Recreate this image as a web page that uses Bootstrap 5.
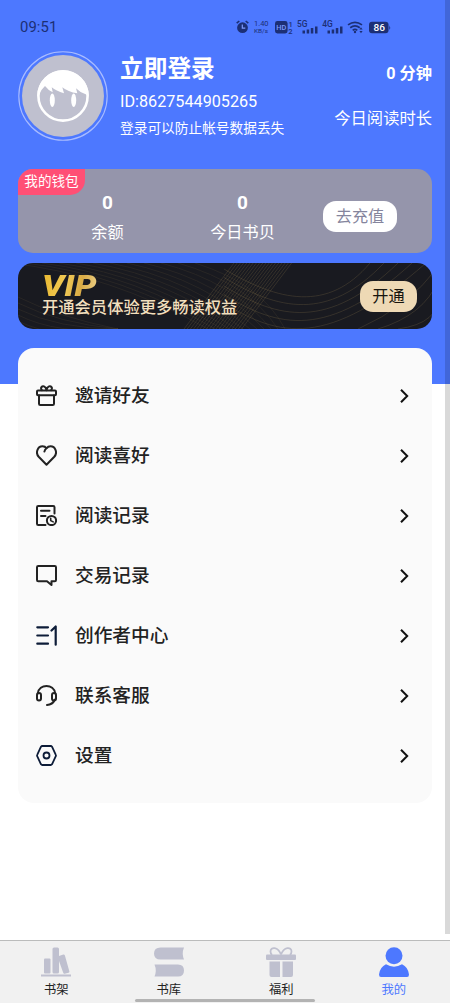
<!DOCTYPE html>
<html lang="zh-CN">
<head>
<meta charset="utf-8">
<meta name="viewport" content="width=device-width, initial-scale=1">
<title>我的</title>
<link href="https://cdn.jsdelivr.net/npm/bootstrap@5.3.0/dist/css/bootstrap.min.css" rel="stylesheet">
<style>
:root{--brand:#4d78ff;--ink:#1c2f75;--muted-icon:#bfc0cf}
body{font-family:Roboto,"Noto Sans CJK SC",sans-serif;background:linear-gradient(var(--brand) 384px,#fff 384px) no-repeat;height:1003px;overflow:hidden;color:#222}
svg{display:block;flex:none}
.status-row{height:51px;padding:4px 0 0 20px;color:var(--ink)}
.clock{font-size:14.8px;width:216px;letter-spacing:.1px}
.profile{height:118px;padding:0 18px}
.avatar{width:90px;height:90px}
.who{margin-left:12px;padding-top:1px}
.who-name{font-size:23.7px;font-weight:700;line-height:34px}
.who-id{font-size:16.2px;line-height:32px}
.who-tip{font-size:13.7px;line-height:20px}
.minutes{font-size:16.2px;font-weight:700;line-height:24px;margin-top:11px}
.today{font-size:16.3px;line-height:24px;margin-top:21px}
.wallet{height:84px;margin:0 18px;border-radius:15px;background:#9595ab}
.wallet-tag{width:67px;height:26px;line-height:25px;font-size:13.6px;background:#ff4f75;border-radius:15px 0 15px 0}
.figure-col{width:135px}
.figure-num{font-size:19px;font-weight:700;line-height:24px;margin-top:22px}
.figure-label{font-size:16.2px;line-height:24px;margin-top:6px}
.pill{font-size:16.2px;line-height:31px;height:31px;border-radius:13px}
.pill-charge{width:74px;background:#fff;color:#85859d;margin:32px 0 0 35px}
.pill-open{width:57px;background:#eed9b5;color:#17150f;margin-right:15px}
.vip{height:66px;margin:10px 18px 19px;border-radius:15px;background:#191a20;color:#f2dfbd}
.vip-word{font-size:29px;font-weight:900;font-style:italic;line-height:24px;background:linear-gradient(100deg,#e9b82f,#f0c955 40%,#d9ab45 65%,#f3dc9c);-webkit-background-clip:text;background-clip:text;color:transparent;transform:scaleX(1.2);transform-origin:left;padding-right:4px}
.vip-tip{font-size:16.3px;font-weight:500;line-height:20px;margin-top:-5px}
.menu{height:455px;margin:0 18px;padding:17px 18px 0;border-radius:16px;background:#fafafa}
.menu-line{height:60px;font-size:18.7px;font-weight:500;color:#222}
.menu-line svg{fill:none;stroke:#222;stroke-width:2;stroke-linejoin:round;stroke-linecap:round}
.menu-line .navy{stroke:#0d1c38}
.menu-line .chev{stroke:#111;stroke-linejoin:miter;stroke-linecap:butt}
.menu-name{margin-left:18px;padding-top:2px}
.tabs{height:63px;background:#f1f1f1;border-top:1px solid #bbbcbc}
.tab-cell{color:#222;font-size:12.3px;line-height:20px;padding-top:6px}
.tab-cell svg{fill:var(--muted-icon);margin-bottom:3px}
.tab-cell.now{color:var(--brand)}
.tab-cell.now svg{fill:var(--brand)}
.home-bar{width:180px;height:3px;border-radius:2px;background:#b3b3b3;left:135px;bottom:1px}
.scroll-track{width:5px;height:934px;background:rgba(0,0,0,.15)}
</style>
</head>
<body class="position-relative d-flex flex-column">
<header class="status-row d-flex align-items-center">
  <span class="clock">09:51</span>
  <svg width="160" height="20" viewBox="0 0 160 20" fill="#1c2f75" stroke="none" font-family="Roboto" font-weight="500">
    <circle cx="6.5" cy="9.7" r="5.4"/><path d="M.7 5.2 3.3 3M12.3 5.2 9.7 3" stroke="#1c2f75" stroke-width="1.6"/><path d="M6.3 6.5v3.7h3" fill="none" stroke="#7d9bff" stroke-width="1.2"/>
    <text x="18" y="8.4" font-size="7.5" font-weight="400" textLength="14.5" lengthAdjust="spacingAndGlyphs">1.40</text><text x="18" y="15.3" font-size="6.2" font-weight="400" textLength="14" lengthAdjust="spacingAndGlyphs">KB/s</text>
    <rect x="39" y="3" width="12.6" height="12.4" rx="2.4"/><text x="40.3" y="12" font-size="8" fill="#7d9bff" textLength="10" lengthAdjust="spacingAndGlyphs">HD</text>
    <text x="52.5" y="8.5" font-size="7.5">1</text><text x="52.3" y="15.600" font-size="7.5">2</text>
    <text x="61" y="8.5" font-size="8.2" textLength="10.5" lengthAdjust="spacingAndGlyphs">5G</text><path d="M66.500 12.500h2.500v3h-2.500zM70.700 11.500h2.500v4h-2.500zM74.800 10h2.500v5.500h-2.500zM79 8.500h2.500v7h-2.500z"/>
    <text x="86.3" y="8.5" font-size="8.2" textLength="10.5" lengthAdjust="spacingAndGlyphs">4G</text><path d="M91.500 12.500h2.500v3h-2.500zM95.700 11.500h2.500v4h-2.500zM99.800 10h2.500v5.500h-2.500zM104 8.500h2.500v7h-2.500z"/>
    <path d="M112 6.900q7-5 14 0M114.2 9.700q4.800-3.600 9.600 0M116.700 12.300q2.300-1.800 4.600 0" fill="none" stroke="#1c2f75" stroke-width="1.7"/><circle cx="119" cy="14" r="1.2"/><path d="m125 9.200 1.600 2.200h-3.200zM125 15.200l1.600-2.200h-3.200z"/>
    <rect x="133" y="3.800" width="19.5" height="11.5" rx="3"/><path d="M153.3 7.200q1.800 2.400 0 4.800z"/><text x="137.500" y="12.900" font-size="9.500" fill="#fff" textLength="11.500" lengthAdjust="spacingAndGlyphs">86</text>
  </svg>
</header>

<section class="profile d-flex text-white">
  <svg class="avatar" viewBox="0 0 90 90">
    <circle cx="45" cy="45" r="44.2" fill="none" stroke="#a9bcff" stroke-width="1.1"/>
    <circle cx="45" cy="45" r="41" fill="#bfc0cf"/>
    <circle cx="45" cy="45" r="24.6" fill="none" stroke="#fff" stroke-width="2.600"/>
    <path d="M19.200 45A25.800 25.800 0 0 1 70.800 45L67.700 43.300Q62 41.500 58 37.300L59.300 42.300Q50 41 44.300 36.300L46 42.300Q38 40 33.700 36.300L34.700 41.300Q30 39 27 35 22.500 39 21 44Z" fill="#fff"/>
    <ellipse cx="34.300" cy="49.300" rx="2.500" ry="6.800" fill="#fff"/><ellipse cx="55.700" cy="49.300" rx="2.500" ry="6.800" fill="#fff"/>
  </svg>
  <div class="who">
    <div class="who-name">立即登录</div>
    <div class="who-id">ID:8627544905265</div>
    <div class="who-tip">登录可以防止帐号数据丢失</div>
  </div>
  <div class="ms-auto text-end">
    <div class="minutes">0 分钟</div>
    <div class="today">今日阅读时长</div>
  </div>
</section>

<section class="wallet position-relative d-flex text-white">
  <span class="wallet-tag position-absolute top-0 start-0 text-center">我的钱包</span>
  <div class="figure-col text-center" style="margin-left:22px"><div class="figure-num">0</div><div class="figure-label">余额</div></div>
  <div class="figure-col text-center"><div class="figure-num">0</div><div class="figure-label">今日书贝</div></div>
  <div class="pill pill-charge text-center" style="margin-left:13px">去充值</div>
</section>

<section class="vip position-relative overflow-hidden d-flex align-items-center justify-content-between">
  <svg id="waves" class="position-absolute top-0 start-0" width="414" height="66" fill="none" stroke="#a58a55" stroke-width=".7"></svg>
  <div class="position-relative" style="margin-left:24px">
    <div class="vip-word d-inline-block">VIP</div>
    <div class="vip-tip">开通会员体验更多畅读权益</div>
  </div>
  <div class="pill pill-open text-center position-relative">开通</div>
</section>

<main class="menu">
  <div class="menu-line d-flex align-items-center">
    <svg width="21" height="21" viewBox="0 0 21 21"><rect x="1" y="5.500" width="19" height="4.800" rx="1"/><path d="M3 10.500v8.200q0 1.300 1.300 1.300h12.400q1.300 0 1.300-1.300v-8.200M5.800 5.200C4 2.800 6 .8 8 1.400 9.500 2 10.200 3.700 10.500 5.200 10.800 3.700 11.500 2 13 1.400 15 .8 17 2.800 15.200 5.200"/></svg>
    <span class="menu-name">邀请好友</span>
  </div>
  <div class="menu-line d-flex align-items-center">
    <svg width="21" height="21" viewBox="0 0 21 21"><path d="M10.500 19.800 2.700 11.800C-.8 8 1.500 1.300 6.500 1.300 8.500 1.300 9.800 2.300 10.500 3.300 11.500 2 12.800 1.300 14.500 1.300 19.500 1.300 21.800 8 18.300 11.800ZM10.500 3.300Q8.800 4.500 8.400 6.600"/></svg>
    <span class="menu-name">阅读喜好</span>
  </div>
  <div class="menu-line d-flex align-items-center">
    <svg width="21" height="21" viewBox="0 0 21 21"><path d="M9.500 20H2.300Q1 20 1 18.700V2.300Q1 1 2.300 1H17.200Q18.500 1 18.500 2.300V8.500M5 5.800h8.500M5 11h4.500"/><circle cx="15.500" cy="15.500" r="4.600"/><path d="M14.700 13.300v2.300l2.500 1.300" stroke-width="1.600"/></svg>
    <span class="menu-name">阅读记录</span>
  </div>
  <div class="menu-line d-flex align-items-center">
    <svg width="21" height="21" viewBox="0 0 21 21"><path d="M11 16.200H2.300Q1 16.200 1 14.900V2.300Q1 1 2.300 1H18.700Q20 1 20 2.300V14.900Q20 16.200 18.700 16.200H15.500V20L11 16.200"/></svg>
    <span class="menu-name">交易记录</span>
  </div>
  <div class="menu-line d-flex align-items-center">
    <svg class="navy" width="21" height="21" viewBox="0 0 21 21" style="stroke-width:2.200"><path d="M1.300 2.300H12M1.300 10.500H12M1.300 18.700H12M15.500 5.500 19.700 1.500V19.700"/></svg>
    <span class="menu-name">创作者中心</span>
  </div>
  <div class="menu-line d-flex align-items-center">
    <svg width="21" height="21" viewBox="0 0 21 21"><path d="M1.800 8.500C3-1.500 18-1.500 19.200 8.500M19 14.500Q16.500 19.800 11 20"/><rect x="1" y="8" width="4" height="7.500" rx="2"/><rect x="16" y="8" width="4" height="7.500" rx="2"/></svg>
    <span class="menu-name">联系客服</span>
  </div>
  <div class="menu-line d-flex align-items-center">
    <svg class="navy" width="21" height="21" viewBox="0 0 21 21" style="stroke-width:1.800"><path d="M6.300 1H14.700Q15.500 1 16 1.700L19.700 9.600Q20.200 10.500 19.700 11.400L16 19.300Q15.500 20 14.700 20H6.300Q5.500 20 5 19.300L1.300 11.400Q.8 10.500 1.300 9.600L5 1.700Q5.500 1 6.300 1Z"/><circle cx="10.500" cy="10.500" r="3"/></svg>
    <span class="menu-name">设置</span>
  </div>
</main>

<nav class="tabs mt-auto position-relative row g-0">
  <div class="tab-cell col d-flex flex-column align-items-center">
    <svg width="30" height="30" viewBox="0 0 30 30"><rect x="3" y="11.500" width="6.500" height="15" rx="1"/><rect x="11.500" y=".5" width="6.500" height="26" rx="1.500"/><path d="m18 9 4.300-1.500q1.200-.2 1.600 1l4.500 16q.2 1-.8 1.300l-4 1q-1 .2-1.300-.8L18 14Z"/><rect y="27.500" width="30" height="2"/></svg>
    <span>书架</span>
  </div>
  <div class="tab-cell col d-flex flex-column align-items-center">
    <svg width="30" height="30" viewBox="0 0 30 30"><path d="M6.500.500H30Q27.500 6.500 30 12.500H6.500Q0 12.500 0 6.500T6.500.500ZM.500 17.500H24Q30 17.500 30 23.500T24 29.500H.500Q3 23.500.500 17.500Z"/></svg>
    <span>书库</span>
  </div>
  <div class="tab-cell col d-flex flex-column align-items-center">
    <svg width="30" height="30" viewBox="0 0 30 30"><rect y="7.500" width="30" height="5.500" rx="1"/><path d="M3.500 14.500H14V30H5.500Q3.500 30 3.500 28ZM16.500 14.500H27V28Q27 30 25 30H16.500Z"/><path d="M15 7.500C12-.500 4.500-.500 4.500 4.500Q4.500 6.500 6 8M15 7.500C18-.500 25.500-.500 25.500 4.500Q25.500 6.500 24 8" fill="none" stroke="#bfc0cf" stroke-width="1.800"/></svg>
    <span>福利</span>
  </div>
  <div class="tab-cell now col d-flex flex-column align-items-center">
    <svg width="30" height="30" viewBox="0 0 30 30"><circle cx="15" cy="8.700" r="8.500"/><path d="M7 17.300Q15 22 23 17.300Q29 20 30 27.500 30 30 28 30H2Q0 30 0 27.500 1 20 7 17.300Z"/></svg>
    <span>我的</span>
  </div>
  <div class="home-bar position-absolute"></div>
</nav>
<div class="scroll-track position-absolute top-0 end-0"></div>

<script src="https://cdn.jsdelivr.net/npm/bootstrap@5.3.0/dist/js/bootstrap.bundle.min.js"></script>
<script>
// Forward chevron at the end of every menu line
document.querySelectorAll('.menu-line').forEach(function (line) {
  line.insertAdjacentHTML('beforeend', '<svg class="chev ms-auto" width="18" height="16" viewBox="0 0 18 16" style="margin-top:1px"><path d="M5 1.800 11.200 8 5 14.200"/></svg>');
});
// Fine gold line pattern on the VIP banner
var d = '', faint = '';
for (var i = 0; i < 19; i++) d += 'M' + (216 + i * 3.2) + ' 0L' + (166 + i * 3.2) + ' 66';
for (i = 0; i < 5; i++) d += 'M206 ' + (6 + i * 8.5) + 'C260 ' + (38 + i * 9) + ' 310 ' + (50 + i * 9) + ' ' + (352 + i * 14) + ' 0';
for (i = 0; i < 3; i++) d += 'M' + (340 + i * 20) + ' 66Q' + (390 + i * 16) + ' ' + (44 + i * 8) + ' 420 ' + (4 + i * 14);
for (i = 0; i < 12; i++) faint += 'M' + (i * 17 - 10) + ' 0Q' + (90 + i * 14) + ' ' + (10 + i) + ' ' + (190 + i * 7) + ' 66M0 ' + (34 + i * 6) + 'Q40 ' + (54 + i * 6) + ' 100 66';
document.getElementById('waves').innerHTML = '<path opacity=".3" d="' + d + '"/><path opacity=".16" d="' + faint + '"/>';
</script>
</body>
</html>
